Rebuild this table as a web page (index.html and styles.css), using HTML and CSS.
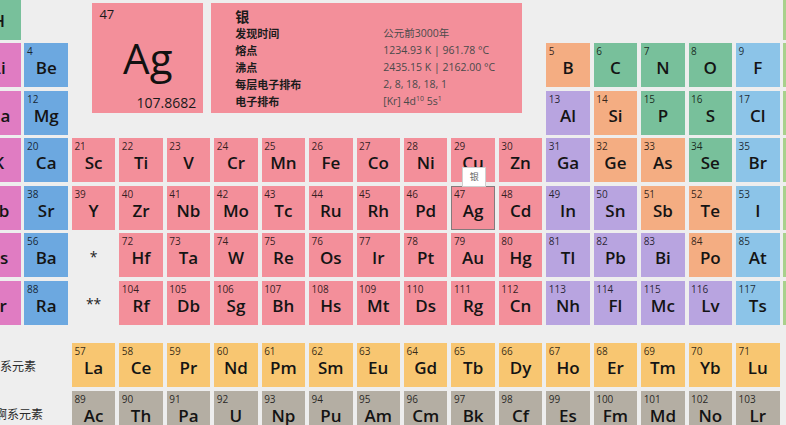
FILE: index.html
```html
<!DOCTYPE html>
<html lang="zh">
<head>
<meta charset="utf-8">
<title>元素周期表</title>
<link rel="stylesheet" href="styles.css">
</head>
<body>
<div class="table">
  <div class="grid main">
    <div class="panel">
      <div class="big">
        <div class="big-num">47</div>
        <div class="big-sym">Ag</div>
        <div class="big-mass">107.8682</div>
      </div>
      <div class="info">
        <div class="info-title">银</div>
        <div class="info-rows">
          <div class="k">发现时间</div><div class="v">公元前3000年</div>
          <div class="k">熔点</div><div class="v">1234.93 K | 961.78 °C</div>
          <div class="k">沸点</div><div class="v">2435.15 K | 2162.00 °C</div>
          <div class="k">每层电子排布</div><div class="v">2, 8, 18, 18, 1</div>
          <div class="k">电子排布</div><div class="v">[Kr] 4d<sup>10</sup> 5s<sup>1</sup></div>
        </div>
      </div>
    </div>

    <div class="el nm"><span class="num">1</span><span class="sym">H</span></div>
    <div class="blank"></div>
    <div class="blank"></div><div class="blank"></div><div class="blank"></div><div class="blank"></div><div class="blank"></div>
    <div class="el ng"><span class="num">2</span><span class="sym">He</span></div>

    <div class="el am"><span class="num">3</span><span class="sym">Li</span></div>
    <div class="el ae"><span class="num">4</span><span class="sym">Be</span></div>
    <div class="el md"><span class="num">5</span><span class="sym">B</span></div>
    <div class="el nm"><span class="num">6</span><span class="sym">C</span></div>
    <div class="el nm"><span class="num">7</span><span class="sym">N</span></div>
    <div class="el nm"><span class="num">8</span><span class="sym">O</span></div>
    <div class="el hl"><span class="num">9</span><span class="sym">F</span></div>
    <div class="el ng"><span class="num">10</span><span class="sym">Ne</span></div>

    <div class="el am"><span class="num">11</span><span class="sym">Na</span></div>
    <div class="el ae"><span class="num">12</span><span class="sym">Mg</span></div>
    <div class="el pt"><span class="num">13</span><span class="sym">Al</span></div>
    <div class="el md"><span class="num">14</span><span class="sym">Si</span></div>
    <div class="el nm"><span class="num">15</span><span class="sym">P</span></div>
    <div class="el nm"><span class="num">16</span><span class="sym">S</span></div>
    <div class="el hl"><span class="num">17</span><span class="sym">Cl</span></div>
    <div class="el ng"><span class="num">18</span><span class="sym">Ar</span></div>

    <div class="el am"><span class="num">19</span><span class="sym">K</span></div>
    <div class="el ae"><span class="num">20</span><span class="sym">Ca</span></div>
    <div class="el tm"><span class="num">21</span><span class="sym">Sc</span></div>
    <div class="el tm"><span class="num">22</span><span class="sym">Ti</span></div>
    <div class="el tm"><span class="num">23</span><span class="sym">V</span></div>
    <div class="el tm"><span class="num">24</span><span class="sym">Cr</span></div>
    <div class="el tm"><span class="num">25</span><span class="sym">Mn</span></div>
    <div class="el tm"><span class="num">26</span><span class="sym">Fe</span></div>
    <div class="el tm"><span class="num">27</span><span class="sym">Co</span></div>
    <div class="el tm"><span class="num">28</span><span class="sym">Ni</span></div>
    <div class="el tm"><span class="num">29</span><span class="sym">Cu</span></div>
    <div class="el tm"><span class="num">30</span><span class="sym">Zn</span></div>
    <div class="el pt"><span class="num">31</span><span class="sym">Ga</span></div>
    <div class="el md"><span class="num">32</span><span class="sym">Ge</span></div>
    <div class="el md"><span class="num">33</span><span class="sym">As</span></div>
    <div class="el nm"><span class="num">34</span><span class="sym">Se</span></div>
    <div class="el hl"><span class="num">35</span><span class="sym">Br</span></div>
    <div class="el ng"><span class="num">36</span><span class="sym">Kr</span></div>

    <div class="el am"><span class="num">37</span><span class="sym">Rb</span></div>
    <div class="el ae"><span class="num">38</span><span class="sym">Sr</span></div>
    <div class="el tm"><span class="num">39</span><span class="sym">Y</span></div>
    <div class="el tm"><span class="num">40</span><span class="sym">Zr</span></div>
    <div class="el tm"><span class="num">41</span><span class="sym">Nb</span></div>
    <div class="el tm"><span class="num">42</span><span class="sym">Mo</span></div>
    <div class="el tm"><span class="num">43</span><span class="sym">Tc</span></div>
    <div class="el tm"><span class="num">44</span><span class="sym">Ru</span></div>
    <div class="el tm"><span class="num">45</span><span class="sym">Rh</span></div>
    <div class="el tm"><span class="num">46</span><span class="sym">Pd</span></div>
    <div class="el tm hover"><span class="num">47</span><span class="sym">Ag</span><span class="tip">银</span></div>
    <div class="el tm"><span class="num">48</span><span class="sym">Cd</span></div>
    <div class="el pt"><span class="num">49</span><span class="sym">In</span></div>
    <div class="el pt"><span class="num">50</span><span class="sym">Sn</span></div>
    <div class="el md"><span class="num">51</span><span class="sym">Sb</span></div>
    <div class="el md"><span class="num">52</span><span class="sym">Te</span></div>
    <div class="el hl"><span class="num">53</span><span class="sym">I</span></div>
    <div class="el ng"><span class="num">54</span><span class="sym">Xe</span></div>

    <div class="el am"><span class="num">55</span><span class="sym">Cs</span></div>
    <div class="el ae"><span class="num">56</span><span class="sym">Ba</span></div>
    <div class="star">*</div>
    <div class="el tm"><span class="num">72</span><span class="sym">Hf</span></div>
    <div class="el tm"><span class="num">73</span><span class="sym">Ta</span></div>
    <div class="el tm"><span class="num">74</span><span class="sym">W</span></div>
    <div class="el tm"><span class="num">75</span><span class="sym">Re</span></div>
    <div class="el tm"><span class="num">76</span><span class="sym">Os</span></div>
    <div class="el tm"><span class="num">77</span><span class="sym">Ir</span></div>
    <div class="el tm"><span class="num">78</span><span class="sym">Pt</span></div>
    <div class="el tm"><span class="num">79</span><span class="sym">Au</span></div>
    <div class="el tm"><span class="num">80</span><span class="sym">Hg</span></div>
    <div class="el pt"><span class="num">81</span><span class="sym">Tl</span></div>
    <div class="el pt"><span class="num">82</span><span class="sym">Pb</span></div>
    <div class="el pt"><span class="num">83</span><span class="sym">Bi</span></div>
    <div class="el md"><span class="num">84</span><span class="sym">Po</span></div>
    <div class="el hl"><span class="num">85</span><span class="sym">At</span></div>
    <div class="el ng"><span class="num">86</span><span class="sym">Rn</span></div>

    <div class="el am"><span class="num">87</span><span class="sym">Fr</span></div>
    <div class="el ae"><span class="num">88</span><span class="sym">Ra</span></div>
    <div class="star">**</div>
    <div class="el tm"><span class="num">104</span><span class="sym">Rf</span></div>
    <div class="el tm"><span class="num">105</span><span class="sym">Db</span></div>
    <div class="el tm"><span class="num">106</span><span class="sym">Sg</span></div>
    <div class="el tm"><span class="num">107</span><span class="sym">Bh</span></div>
    <div class="el tm"><span class="num">108</span><span class="sym">Hs</span></div>
    <div class="el tm"><span class="num">109</span><span class="sym">Mt</span></div>
    <div class="el tm"><span class="num">110</span><span class="sym">Ds</span></div>
    <div class="el tm"><span class="num">111</span><span class="sym">Rg</span></div>
    <div class="el tm"><span class="num">112</span><span class="sym">Cn</span></div>
    <div class="el pt"><span class="num">113</span><span class="sym">Nh</span></div>
    <div class="el pt"><span class="num">114</span><span class="sym">Fl</span></div>
    <div class="el pt"><span class="num">115</span><span class="sym">Mc</span></div>
    <div class="el pt"><span class="num">116</span><span class="sym">Lv</span></div>
    <div class="el hl"><span class="num">117</span><span class="sym">Ts</span></div>
    <div class="el ng"><span class="num">118</span><span class="sym">Og</span></div>
  </div>

  <div class="grid fblock">
    <div class="series lan">镧系元素</div>
    <div class="el ln"><span class="num">57</span><span class="sym">La</span></div>
    <div class="el ln"><span class="num">58</span><span class="sym">Ce</span></div>
    <div class="el ln"><span class="num">59</span><span class="sym">Pr</span></div>
    <div class="el ln"><span class="num">60</span><span class="sym">Nd</span></div>
    <div class="el ln"><span class="num">61</span><span class="sym">Pm</span></div>
    <div class="el ln"><span class="num">62</span><span class="sym">Sm</span></div>
    <div class="el ln"><span class="num">63</span><span class="sym">Eu</span></div>
    <div class="el ln"><span class="num">64</span><span class="sym">Gd</span></div>
    <div class="el ln"><span class="num">65</span><span class="sym">Tb</span></div>
    <div class="el ln"><span class="num">66</span><span class="sym">Dy</span></div>
    <div class="el ln"><span class="num">67</span><span class="sym">Ho</span></div>
    <div class="el ln"><span class="num">68</span><span class="sym">Er</span></div>
    <div class="el ln"><span class="num">69</span><span class="sym">Tm</span></div>
    <div class="el ln"><span class="num">70</span><span class="sym">Yb</span></div>
    <div class="el ln"><span class="num">71</span><span class="sym">Lu</span></div>
    <div class="blank"></div>

    <div class="series act">锕系元素</div>
    <div class="el ac"><span class="num">89</span><span class="sym">Ac</span></div>
    <div class="el ac"><span class="num">90</span><span class="sym">Th</span></div>
    <div class="el ac"><span class="num">91</span><span class="sym">Pa</span></div>
    <div class="el ac"><span class="num">92</span><span class="sym">U</span></div>
    <div class="el ac"><span class="num">93</span><span class="sym">Np</span></div>
    <div class="el ac"><span class="num">94</span><span class="sym">Pu</span></div>
    <div class="el ac"><span class="num">95</span><span class="sym">Am</span></div>
    <div class="el ac"><span class="num">96</span><span class="sym">Cm</span></div>
    <div class="el ac"><span class="num">97</span><span class="sym">Bk</span></div>
    <div class="el ac"><span class="num">98</span><span class="sym">Cf</span></div>
    <div class="el ac"><span class="num">99</span><span class="sym">Es</span></div>
    <div class="el ac"><span class="num">100</span><span class="sym">Fm</span></div>
    <div class="el ac"><span class="num">101</span><span class="sym">Md</span></div>
    <div class="el ac"><span class="num">102</span><span class="sym">No</span></div>
    <div class="el ac"><span class="num">103</span><span class="sym">Lr</span></div>
    <div class="blank"></div>
  </div>
</div>
</body>
</html>
```
FILE: styles.css
```css
html, body {
  margin: 0;
  padding: 0;
}
body {
  width: 786px;
  height: 425px;
  overflow: hidden;
  background: #eeeeee;
  font-family: "Open Sans", "Noto Sans", "Noto Sans CJK SC", sans-serif;
  color: #141414;
}
.table {
  margin: -4.5px 0 0 -23px;
  width: max-content;
}
.grid {
  display: grid;
  grid-template-columns: repeat(18, 43.5px);
  grid-auto-rows: 44px;
  column-gap: 3.94px;
  row-gap: 3.5px;
}
.fblock {
  margin-top: 18.5px;
}
.el {
  display: flex;
  flex-direction: column;
  position: relative;
  overflow: visible;
}
.num {
  font-size: 10px;
  line-height: 12px;
  padding: 2px 0 0 2.5px;
  color: rgba(0, 0, 0, 0.8);
}
.sym {
  font-size: 17px;
  line-height: 22px;
  text-align: center;
  font-weight: 600;
  color: #141414;
}
.nm { background: #78c09b; }
.am { background: #e07cc2; }
.ae { background: #6ca8e0; }
.md { background: #f4ad82; }
.hl { background: #8cc4e8; }
.pt { background: #b8a4e0; }
.tm { background: #f38f9a; }
.ng { background: #a8d18c; }
.ln { background: #f8c671; }
.ac { background: #b4aea3; }

.hover {
  box-shadow: inset 0 0 0 1px #857a7c;
}
.tip {
  position: absolute;
  left: 11px;
  top: -19px;
  width: 22px;
  height: 18px;
  background: #ffffff;
  border: 1px solid #cfcfcf;
  font-family: "Noto Sans CJK SC", sans-serif;
  font-size: 9px;
  line-height: 18px;
  text-align: center;
  color: #666;
  z-index: 2;
}
.star {
  display: flex;
  align-items: center;
  justify-content: center;
  font-size: 14px;
  color: #222;
  padding-top: 2px;
}

.panel {
  grid-column: 3 / span 10;
  grid-row: 1 / span 3;
  display: flex;
  align-items: flex-start;
  gap: 8px;
  padding: 7.5px 20.5px 0 20.5px;
}
.big {
  width: 111px;
  height: 110px;
  background: #f38f9a;
  display: grid;
  grid-template-rows: auto 1fr auto;
}
.big-num {
  font-size: 13px;
  line-height: 16px;
  padding: 3px 0 0 7px;
  color: #1a1a1a;
}
.big-sym {
  display: flex;
  align-items: center;
  justify-content: center;
  font-size: 42px;
  line-height: 42px;
  font-weight: 500;
  color: #111;
}
.big-mass {
  font-size: 14px;
  line-height: 16px;
  text-align: right;
  padding: 0 7px 2.5px 0;
  color: #1a1a1a;
}
.info {
  width: 311px;
  height: 110px;
  box-sizing: border-box;
  background: #f38f9a;
  padding: 3px 0 0 24px;
  font-family: "Noto Sans CJK SC", sans-serif;
}
.info-title {
  font-size: 14px;
  line-height: 18px;
  font-weight: 700;
  color: #1a1a1a;
  padding-top: 0.5px;
}
.info-rows {
  display: grid;
  grid-template-columns: 148px 1fr;
  grid-auto-rows: 17px;
  font-size: 11px;
  line-height: 17px;
}
.k {
  font-weight: 700;
  color: #1c1c1c;
}
.v {
  font-family: "Open Sans", "Noto Sans CJK SC", sans-serif;
  color: #4a4a4a;
  font-size: 10.5px;
}
.v sup {
  font-size: 7px;
  line-height: 0;
  vertical-align: 4px;
}
.series {
  grid-column: span 2;
  display: flex;
  align-items: center;
  font-family: "Noto Sans CJK SC", sans-serif;
  font-size: 12px;
  color: #2a2a2a;
}
.lan { padding-left: 11px; }
.act { padding-left: 18px; padding-top: 1px; }
```
